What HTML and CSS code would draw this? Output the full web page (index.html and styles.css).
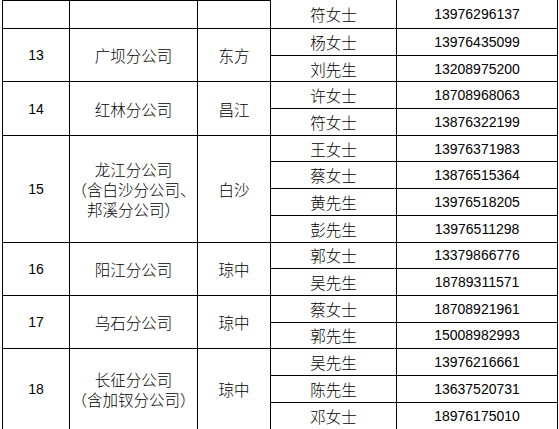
FILE: index.html
```html
<!DOCTYPE html>
<html lang="zh-CN">
<head>
<meta charset="utf-8">
<title>分公司联系方式</title>
<link rel="stylesheet" href="styles.css">
</head>
<body>
<div class="sheet">
  <div class="c top"></div><div class="c top"></div><div class="c top"></div>
  <div class="c">符女士</div><div class="c tel">13976296137</div>

  <div class="c num span2">13</div><div class="c span2">广坝分公司</div><div class="c span2">东方</div>
  <div class="c">杨女士</div><div class="c tel">13976435099</div>
  <div class="c">刘先生</div><div class="c tel">13208975200</div>

  <div class="c num span2">14</div><div class="c span2">红林分公司</div><div class="c span2">昌江</div>
  <div class="c">许女士</div><div class="c tel">18708968063</div>
  <div class="c">符女士</div><div class="c tel">13876322199</div>

  <div class="c num span4">15</div><div class="c span4">龙江分公司<br>（含白沙分公司、<br>邦溪分公司）</div><div class="c span4">白沙</div>
  <div class="c">王女士</div><div class="c tel">13976371983</div>
  <div class="c">蔡女士</div><div class="c tel">13876515364</div>
  <div class="c">黄先生</div><div class="c tel">13976518205</div>
  <div class="c">彭先生</div><div class="c tel">13976511298</div>

  <div class="c num span2">16</div><div class="c span2">阳江分公司</div><div class="c span2">琼中</div>
  <div class="c">郭女士</div><div class="c tel">13379866776</div>
  <div class="c">吴先生</div><div class="c tel">18789311571</div>

  <div class="c num span2">17</div><div class="c span2">乌石分公司</div><div class="c span2">琼中</div>
  <div class="c">蔡女士</div><div class="c tel">18708921961</div>
  <div class="c">郭先生</div><div class="c tel">15008982993</div>

  <div class="c num span3">18</div><div class="c span3">长征分公司<br>（含加钗分公司）</div><div class="c span3">琼中</div>
  <div class="c">吴先生</div><div class="c tel">13976216661</div>
  <div class="c">陈先生</div><div class="c tel">13637520731</div>
  <div class="c">邓女士</div><div class="c tel">18976175010</div>
</div>
</body>
</html>
```
FILE: styles.css
```css
html, body {
  margin: 0;
  padding: 0;
  background: #fff;
}

.sheet {
  display: grid;
  box-sizing: border-box;
  width: 556px;
  margin-left: 2px;
  padding: 0 1px 1px 1px;
  gap: 1px;
  background: #000;
  grid-template-columns: 66px 127px 72px 125px 160px;
  grid-template-rows: 28px repeat(14, 25.7px) 26.7px;
}

.c {
  background: #fff;
  display: flex;
  align-items: center;
  justify-content: center;
  text-align: center;
  font-family: "Noto Sans CJK SC", sans-serif;
  font-weight: 300;
  font-size: 15.5px;
  line-height: 20px;
  color: #000;
  white-space: nowrap;
}

.num,
.tel {
  font-family: "Liberation Sans", "Noto Sans CJK SC", sans-serif;
  font-weight: 400;
  font-size: 14px;
}

.top {
  border-top: 1px solid #000;
}

.span2 { grid-row: span 2; }
.span3 { grid-row: span 3; }
.span4 { grid-row: span 4; }
```
